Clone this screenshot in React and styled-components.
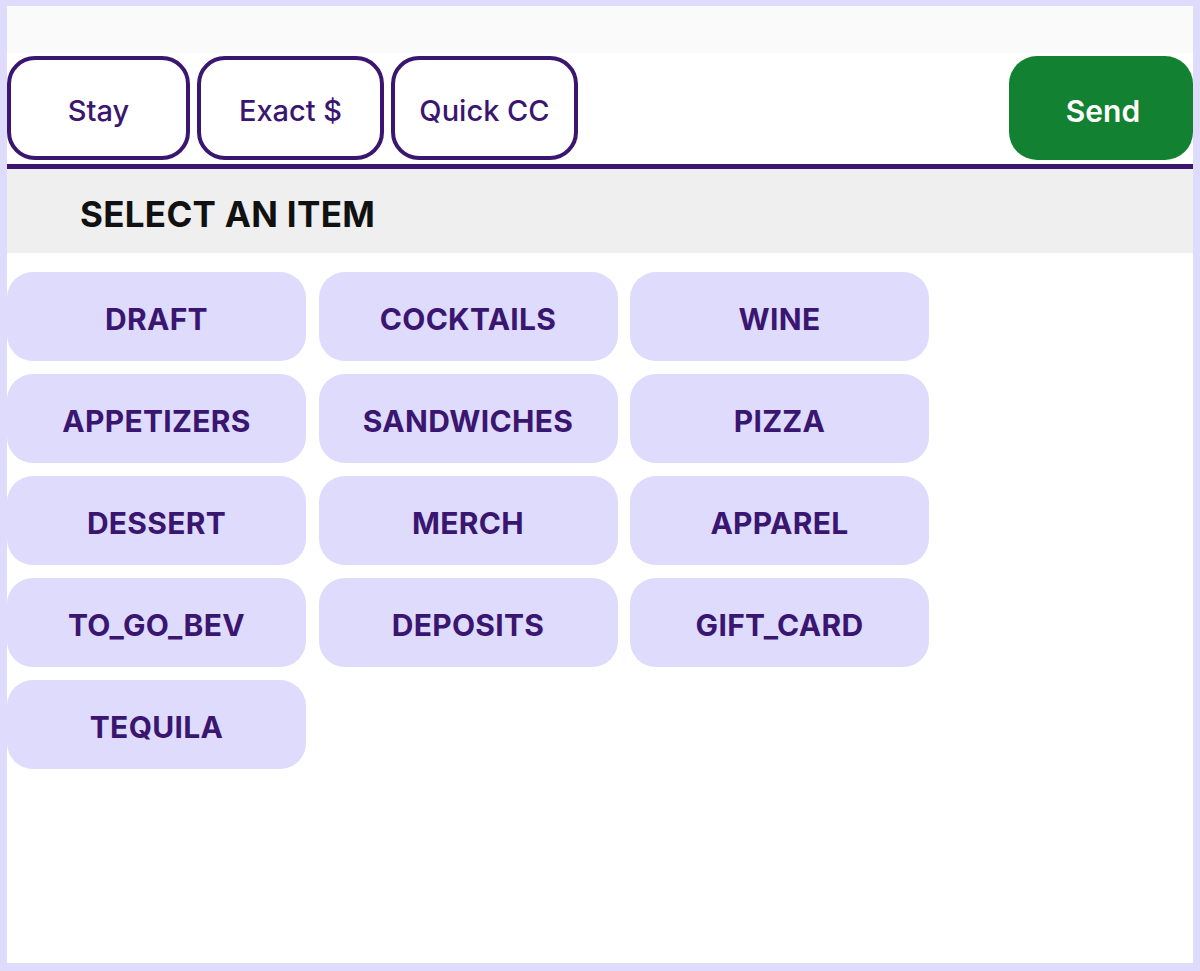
import React from "react";
import styled, { createGlobalStyle } from "styled-components";

const Global = createGlobalStyle`
  html, body { margin: 0; padding: 0; background: #ffffff; }
  body { font-family: Inter, "Liberation Sans", Arial, sans-serif; }
  * { box-sizing: border-box; }
`;

const Frame = styled.div`
  width: 1200px;
  height: 971px;
  border: 7px solid #dedbfd;
  border-top-width: 6px;
  border-bottom-width: 8px;
  background: #ffffff;
  display: flex;
  flex-direction: column;
`;

const TopStrip = styled.div`
  height: 47px;
  background: #fafafa;
`;

const Toolbar = styled.div`
  display: flex;
  align-items: center;
  gap: 7px;
  padding: 3px 0 4px;
  border-bottom: 5px solid #3a1670;
  background: #ffffff;
`;

const ActionButton = styled.button`
  width: ${(p) => p.$w || 187}px;
  height: 104px;
  border: 4px solid #3a1670;
  border-radius: 28px;
  background: #ffffff;
  color: #3a1670;
  font-family: Inter, "Liberation Sans", Arial, sans-serif;
  font-size: 29px;
  font-weight: 500;
  display: flex;
  align-items: center;
  justify-content: center;
  padding: 5px 0 0;
`;

const SendButton = styled.button`
  margin-left: auto;
  width: 184px;
  height: 104px;
  border: none;
  border-radius: 28px;
  background: #128232;
  color: #ffffff;
  font-family: Inter, "Liberation Sans", Arial, sans-serif;
  font-size: 30px;
  font-weight: 600;
  padding: 5px 0 0 4px;
`;

const SectionHeader = styled.div`
  height: 84px;
  background: #efefef;
  display: flex;
  align-items: center;
  padding-left: 73px;
  padding-top: 6px;
  color: #111111;
  font-size: 35px;
  font-weight: 700;
  letter-spacing: 0.3px;
`;

const Grid = styled.div`
  display: grid;
  grid-template-columns: repeat(3, 299px);
  column-gap: 12.5px;
  row-gap: 13px;
  padding-top: 19px;
`;

const ItemButton = styled.button`
  height: 89px;
  border: none;
  border-radius: 26px;
  background: #dedbfd;
  color: #3a1670;
  font-family: Inter, "Liberation Sans", Arial, sans-serif;
  font-size: 30px;
  font-weight: 700;
  text-transform: uppercase;
  letter-spacing: 0.3px;
  padding: 4px 0 0;
`;

const items = [
  "DRAFT",
  "COCKTAILS",
  "WINE",
  "APPETIZERS",
  "SANDWICHES",
  "PIZZA",
  "DESSERT",
  "MERCH",
  "APPAREL",
  "TO_GO_BEV",
  "DEPOSITS",
  "GIFT_CARD",
  "TEQUILA",
];

export default function App() {
  return (
    <>
      <Global />
      <Frame>
        <TopStrip />
        <Toolbar>
          <ActionButton $w={183}>Stay</ActionButton>
          <ActionButton $w={187}>Exact $</ActionButton>
          <ActionButton $w={187}>Quick CC</ActionButton>
          <SendButton>Send</SendButton>
        </Toolbar>
        <SectionHeader>SELECT AN ITEM</SectionHeader>
        <Grid>
          {items.map((it) => (
            <ItemButton key={it}>{it}</ItemButton>
          ))}
        </Grid>
      </Frame>
    </>
  );
}
